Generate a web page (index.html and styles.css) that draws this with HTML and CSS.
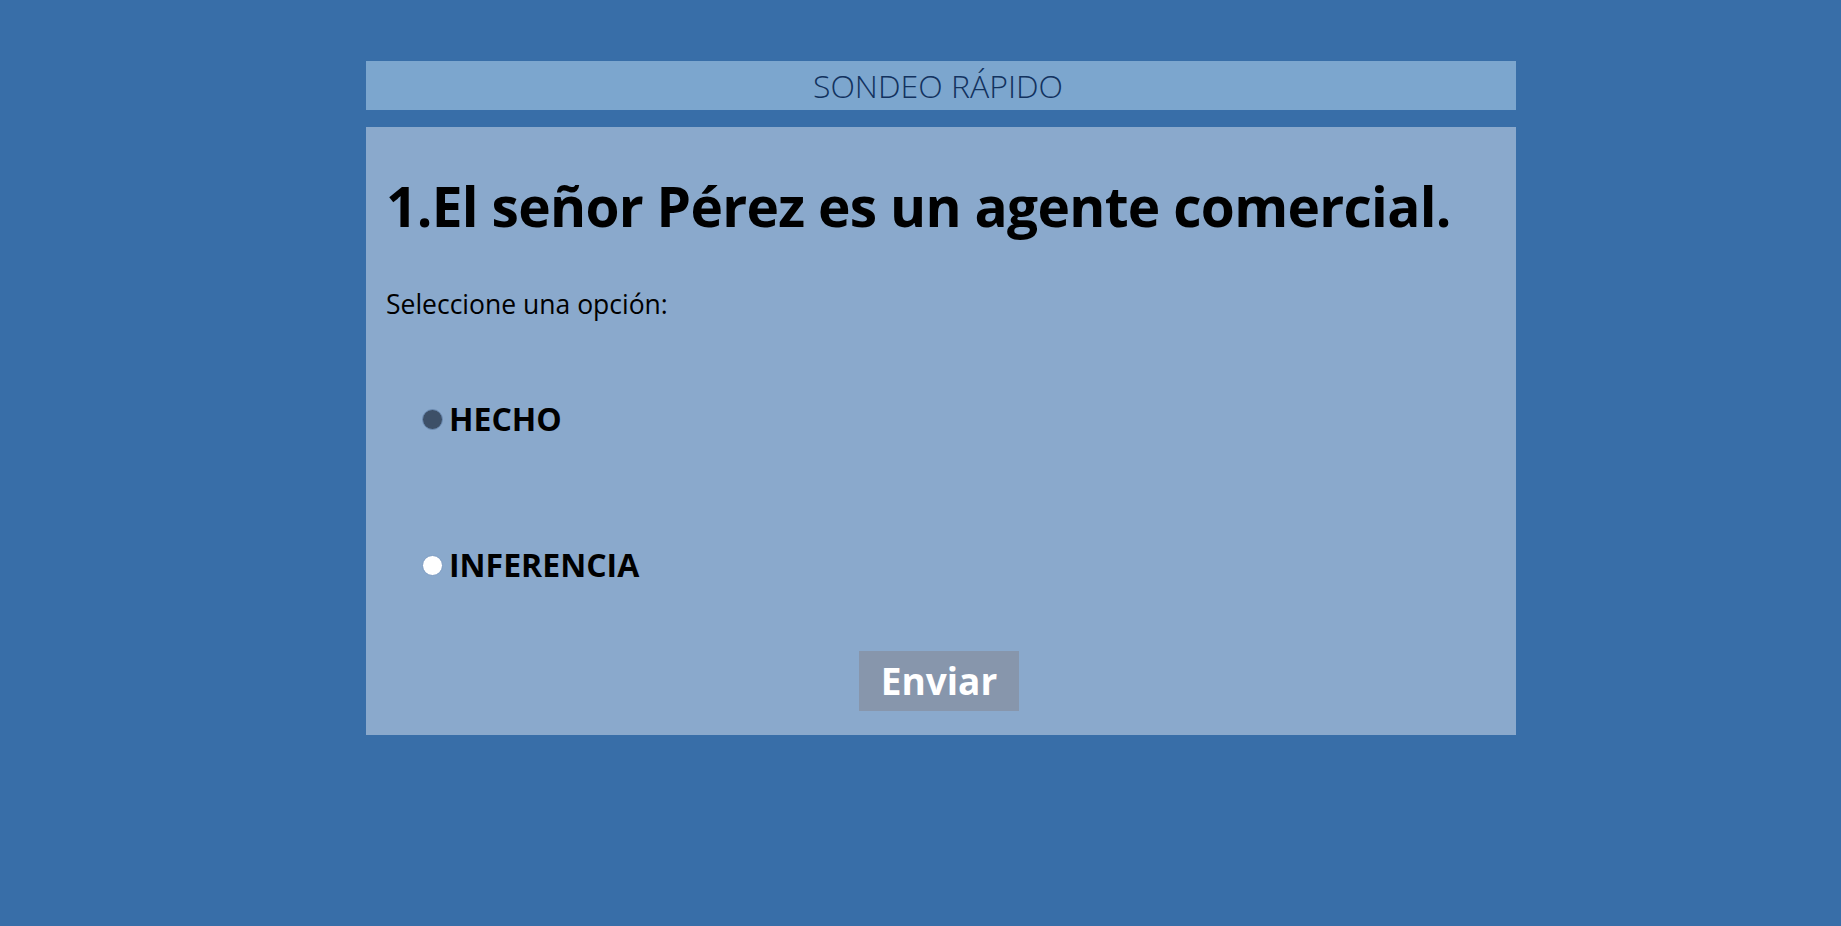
FILE: index.html
```html
<!DOCTYPE html>
<html lang="es">
<head>
<meta charset="utf-8">
<title>Sondeo rápido</title>
<link rel="stylesheet" href="styles.css">
</head>
<body>
<div class="page">
  <div class="banner">SONDEO RÁPIDO</div>
  <form class="card">
    <h1 class="question">1.El señor Pérez es un agente comercial.</h1>
    <p class="prompt">Seleccione una opción:</p>
    <label class="option first"><input type="radio" name="r" class="radio" checked><span>HECHO</span></label>
    <label class="option second"><input type="radio" name="r" class="radio"><span>INFERENCIA</span></label>
    <div class="actions"><button type="button" class="send">Enviar</button></div>
  </form>
</div>
</body>
</html>
```

FILE: styles.css
```css
html, body {
  margin: 0;
  padding: 0;
  background: #386ea8;
  height: 100%;
}
body {
  font-family: "Open Sans", "Noto Sans", sans-serif;
  color: #000;
}
.page {
  padding-top: 61px;
  margin-left: 366px;
  width: 1150px;
  display: flex;
  flex-direction: column;
  gap: 17px;
}
.banner {
  height: 49px;
  line-height: 49px;
  background: #7ca6ce;
  color: #12325e;
  text-align: center;
  font-size: 32px;
  font-weight: 300;
  padding-right: 6px;
}
.card {
  background: #8aa9cc;
  height: 608px;
  box-sizing: border-box;
  padding: 44px 24px 24px 20px;
  display: flex;
  flex-direction: column;
  margin: 0;
}
.question {
  margin: 0;
  font-size: 55px;
  letter-spacing: -0.7px;
  line-height: 70px;
  font-weight: 700;
  white-space: nowrap;
}
.prompt {
  margin: 46px 0 0 0;
  font-size: 26.5px;
  line-height: 34px;
}
.option {
  display: flex;
  align-items: center;
  gap: 6px;
  margin-left: 36px;
  font-size: 32px;
  line-height: 40px;
  font-weight: 700;
}
.option.first { margin-top: 78px; }
.option.second { margin-top: 106px; }
.radio {
  appearance: none;
  -webkit-appearance: none;
  width: 21px;
  height: 21px;
  margin: 0;
  border-radius: 50%;
  border: 1px solid #7d9cc2;
  background: #ffffff;
  box-sizing: border-box;
  flex: none;
}
.radio:checked {
  background: #3d5068;
  border-color: #6f8fb6;
}
.actions {
  margin-top: 66px;
  display: flex;
  justify-content: center;
}
.send {
  width: 160px;
  height: 60px;
  border: none;
  background: #8796ac;
  color: #fff;
  font-family: "Open Sans", "Noto Sans", sans-serif;
  font-size: 37px;
  font-weight: 700;
  line-height: 60px;
  padding: 0;
}
```
